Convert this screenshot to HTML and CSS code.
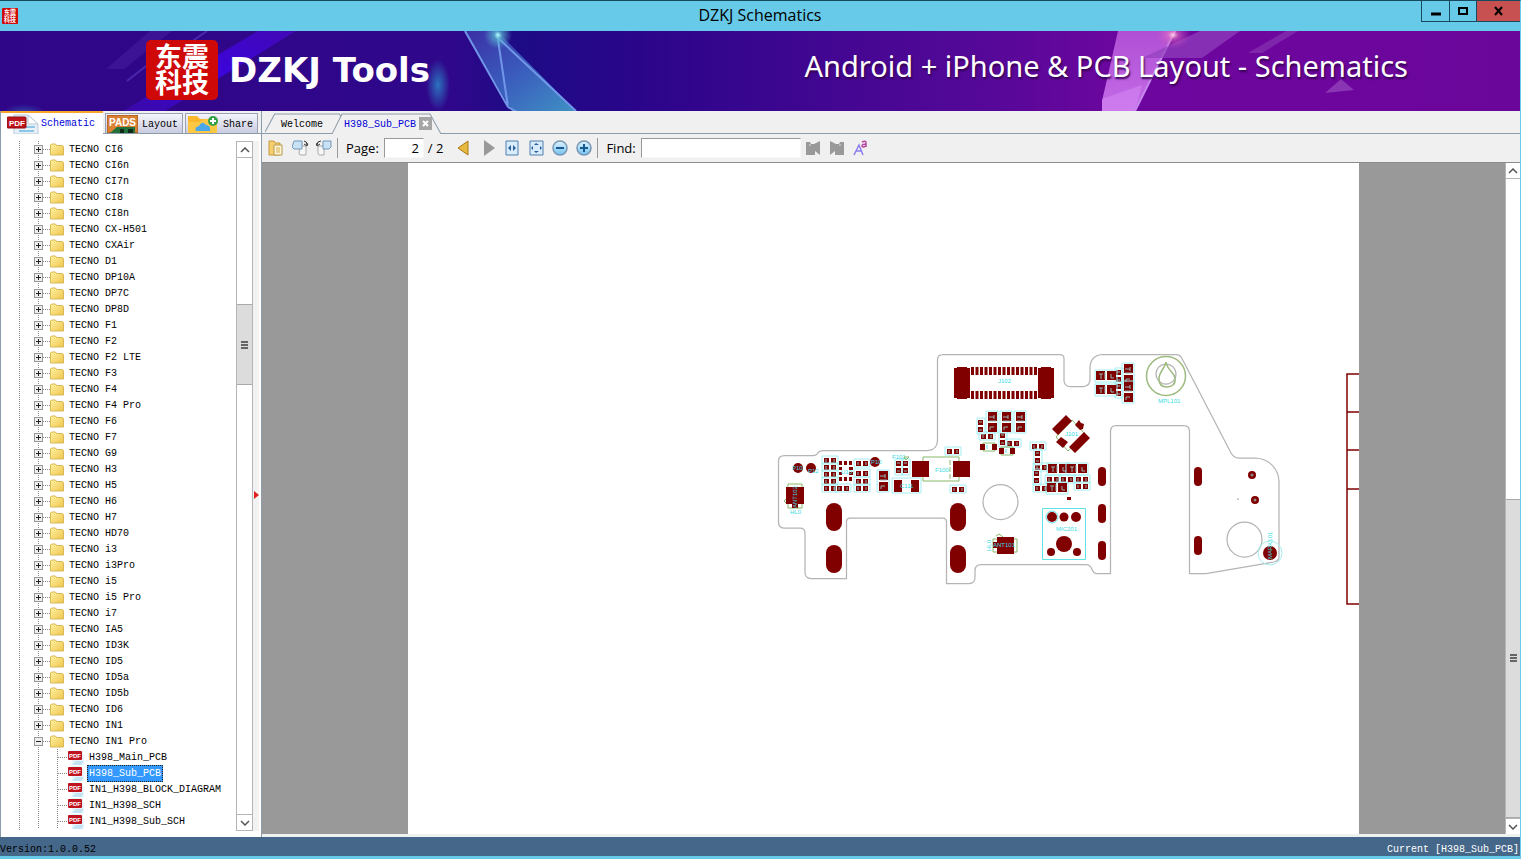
FILE: index.html
```html
<!DOCTYPE html>
<html lang="en">
<head>
    <meta charset="UTF-8">
    <meta name="viewport" content="width=device-width, initial-scale=1.0">
    <title>DZKJ Schematics</title>
    <link rel="stylesheet" href="styles.css">
</head>
<body>
    <svg class="defs" width="0" height="0" aria-hidden="true">
        <linearGradient id="gold" x2="1" y2="1"><stop offset="0" stop-color="#fff2a0"/><stop offset="1" stop-color="#edc650"/></linearGradient>
        <linearGradient id="blue" x2="0" y2="1"><stop offset="0" stop-color="#e4f4fd"/><stop offset="1" stop-color="#6fc0ee"/></linearGradient>
        <symbol id="logo" viewBox="0 0 72 60" overflow="visible">
            <rect width="72" height="60" rx="5" fill="#cf0808"/>
            <text x="9" y="27" class="logo-text">东震</text>
            <text x="9" y="53" class="logo-text">科技</text>
        </symbol>
        <symbol id="folder" viewBox="0 0 14 13">
            <path d="M.5 12V2l1-1h4l1 1.500h6l1 1V12z" fill="url(#gold)" stroke="#d9b855"/>
        </symbol>
        <symbol id="pdf" viewBox="0 0 16 15">
            <path d="M4 0h8l4 4v11H4z" fill="#e6f4fb"/>
            <path d="M7 12h8M5 14h9" stroke="#9fd2ec"/>
            <rect y="1" width="14" height="9" rx="1" fill="#bf1420"/>
            <text x="1" y="8" class="pdf-text">PDF</text>
        </symbol>
    </svg>

    <div class="window">
        <header class="titlebar">
            <svg class="app-icon" viewBox="0 0 72 60" preserveAspectRatio="none"><use href="#logo"/></svg>
            <h1>DZKJ Schematics</h1>
            <div class="window-buttons">
                <button type="button" aria-label="Minimize"><svg width="10" height="10"><path d="M0 8h10" stroke="#000" stroke-width="3"/></svg></button>
                <button type="button" aria-label="Maximize"><svg width="10" height="10"><path d="M1 2h8v6H1z" fill="none" stroke="#000" stroke-width="2"/></svg></button>
                <button type="button" class="close" aria-label="Close"><svg width="10" height="10"><path d="M1 1l7 8M8 1L1 9" stroke="#000" stroke-width="2"/></svg></button>
            </div>
        </header>

        <div class="banner">
            <svg class="banner-art" viewBox="0 0 1520 80" preserveAspectRatio="none" aria-hidden="true">
                <defs>
                    <linearGradient id="violet"><stop offset="0" stop-color="#300688"/><stop offset=".3" stop-color="#2f078a"/><stop offset=".34" stop-color="#1d0b85"/><stop offset=".42" stop-color="#2a058a"/><stop offset=".65" stop-color="#560898"/><stop offset=".74" stop-color="#6d069e"/><stop offset="1" stop-color="#6b069b"/></linearGradient>
                    <linearGradient id="ray" x1="1" x2="0" y2="1"><stop offset="0" stop-color="#4208b4"/><stop offset=".5" stop-color="#3b04dc"/><stop offset="1" stop-color="#3a09a5"/></linearGradient>
                    <linearGradient id="glass" y2="1"><stop offset="0" stop-color="#3b2fa5"/><stop offset=".5" stop-color="#3a5cbd"/><stop offset="1" stop-color="#3f91c4"/></linearGradient>
                    <linearGradient id="pink" x2="0" y2="1"><stop offset="0" stop-color="#b04fd4"/><stop offset="1" stop-color="#c46be8"/></linearGradient>
                    <radialGradient id="glow"><stop offset="0" stop-color="#2b7fc4" stop-opacity=".9"/><stop offset="1" stop-color="#2b7fc4" stop-opacity="0"/></radialGradient>
                    <radialGradient id="spark"><stop offset="0" stop-color="#b6ffff"/><stop offset=".3" stop-color="#57b8d0" stop-opacity=".7"/><stop offset="1" stop-color="#57b8d0" stop-opacity="0"/></radialGradient>
                    <radialGradient id="flare"><stop offset="0" stop-color="#ffd4ec"/><stop offset=".3" stop-color="#e470c4" stop-opacity=".6"/><stop offset="1" stop-color="#c050c0" stop-opacity="0"/></radialGradient>
                </defs>
                <rect width="1520" height="80" fill="url(#violet)"/>
                <path d="M258 0h38L165 80h-42z" fill="url(#ray)"/>
                <path d="M150 0h22l-48 38h-18z" fill="#4820a0" opacity=".5"/>
                <path d="M207 0l-55 38M155 28l-28 22" stroke="#4a27ad" stroke-width="2"/>
                <ellipse cx="438" cy="54" rx="12" ry="26" fill="url(#glow)"/>
                <ellipse cx="24" cy="82" rx="22" ry="9" fill="url(#glow)" opacity=".6"/>
                <path d="M465 0h32l79 80h-64z" fill="url(#glass)"/>
                <path d="M497 2l11 74-43-76M497 6l79 74M508 76l9 5" fill="none" stroke="#7196e8" stroke-width="2"/>
                <ellipse cx="498" cy="4" rx="14" ry="14" fill="url(#spark)"/>
                <path d="M1118 0h58l-41 80h-33V70z" fill="url(#pink)"/>
                <path d="M1102 68l40-14-7 26h-33z" fill="#d58bf4" opacity=".5"/>
                <path d="M1175 0l-40 80" stroke="#c786ec" stroke-width="2"/>
                <path d="M1200 0h40l-38 27h-60z" fill="#9240bd" opacity=".7"/>
                <path d="M1286 0h12l-36 22h-14z" fill="#8c3ab5" opacity=".6"/>
                <path d="M1341 48l13 11-29 3z" fill="#8a35b4"/>
                <ellipse cx="1173" cy="4" rx="18" ry="14" fill="url(#flare)"/>
            </svg>
            <div class="brand">
                <svg class="brand-logo" viewBox="0 0 72 60"><use href="#logo"/></svg>
                <span>DZKJ Tools</span>
            </div>
            <p class="slogan">Android + iPhone &amp; PCB Layout - Schematics</p>
        </div>

        <main class="main">
            <aside class="side">
                <nav class="side-tabs">
                    <button type="button" class="side-tab active">
                        <svg width="32" height="20" viewBox="0 0 32 20"><path d="M7 1h14l10 9v10H7z" fill="#e9f1f8" stroke="#b8cad8"/><path d="M21 1l10 9h-10z" fill="#fff" stroke="#b8cad8"/><path d="M19 13h9M12 17h15" stroke="#8ec6e8" stroke-width="2"/><rect y="3" width="19" height="11" rx="1" fill="#c0141c" stroke="#8e0c12"/><text x="2" y="12" class="badge-text">PDF</text></svg>
                        Schematic
                    </button>
                    <button type="button" class="side-tab">
                        <svg width="31" height="18" viewBox="0 0 31 18"><path d="M0 0h31v18H0z" fill="#d98234"/><path d="M0 0h31v18H0z" fill="none" stroke="#9c4c18"/><path d="M3 18l7-6h18v6z" fill="#23703a"/><path d="M13 14h4v4h-4zM21 14h5v4h-5z" fill="#0e2a18"/><text x="2" y="11" class="pads-text">PADS</text></svg>
                        Layout
                    </button>
                    <button type="button" class="side-tab">
                        <svg width="32" height="18" viewBox="0 0 32 18"><path d="M1 1h9l3 3h14l3 3v11H1z" fill="#fcb82c"/><path d="M1 7h12l4-3h13v14H1z" fill="#ffcf50" opacity=".7"/><path d="M9 16q-2-4 3-5 3-6 7-1 5 0 4 6z" fill="#4aa8ea"/><circle cx="26" cy="6" r="5" fill="#35a046"/><path d="M23 6h6M26 3v6" stroke="#fff" stroke-width="2"/></svg>
                        Share
                    </button>
                </nav>
                <div class="tree-wrap">
                    <ul class="tree" id="tree"></ul>
                    <div class="scrollbar">
                        <button type="button" aria-label="Scroll up"><svg width="10" height="6"><path d="M1 5l4-4 4 4" /></svg></button>
                        <div class="track"><div class="tree-before"></div><div class="thumb tree-thumb"><i></i></div></div>
                        <button type="button" aria-label="Scroll down"><svg width="10" height="6"><path d="M1 1l4 4 4-4" /></svg></button>
                    </div>
                    <div class="splitter"><svg width="5" height="10"><path d="M0 1l5 4-5 4z" fill="#e02020"/></svg></div>
                </div>
            </aside>

            <section class="content">
                <nav class="doc-tabs">
                    <button type="button" class="doc-tab welcome">
                        <svg class="tab-shape" viewBox="0 0 78 21" preserveAspectRatio="none"><path d="M0 20l9-19h60l6 10"/></svg>
                        <span>Welcome</span>
                    </button>
                    <button type="button" class="doc-tab current">
                        <svg class="tab-shape" viewBox="0 0 110 21" preserveAspectRatio="none"><path d="M0 21L10 1h88l11 20"/></svg>
                        <span>H398_Sub_PCB</span>
                        <svg class="tab-close" width="13" height="13"><path d="M0 0h13v13H0z" fill="#a5a5a5"/><path d="M4 4l5 5M9 4L4 9" stroke="#fff" stroke-width="2"/></svg>
                    </button>
                </nav>

                <div class="toolbar">
                    <div class="tools">
                        <button type="button" aria-label="Copy"><svg width="16" height="16"><path d="M1 1h5l1 2h5v12H1z" fill="#f5cf6e" stroke="#c99840"/><path d="M6 5h8v10H6z" fill="#fff7d8" stroke="#b9974e"/><path d="M8 8h4M8 10h4M8 12h4" stroke="#d3a848"/></svg></button>
                        <button type="button" aria-label="Rotate right"><svg width="16" height="16"><path d="M8 6h6v9H8l-1-2z" fill="#f7f7f7" stroke="#aaa"/><path d="M2 1h8v8H2L0 7z" fill="#c9e2f6" stroke="#7399bb"/><path d="M12 1q3 0 3 4M12 4l3 2 1-3" fill="none" stroke="#333"/></svg></button>
                        <button type="button" aria-label="Rotate left"><svg width="16" height="16"><path d="M2 6h6v9H3l-1-2z" fill="#f7f7f7" stroke="#aaa"/><path d="M7 1h8v6l-2 2H7z" fill="#c9e2f6" stroke="#7399bb"/><path d="M5 1Q1 1 1 5M4 4L1 6 0 3" fill="none" stroke="#333"/></svg></button>
                    </div>
                    <div class="page-field">
                        <label for="page">Page:</label>
                        <input type="text" id="page" value="2">
                        <span>/ 2</span>
                    </div>
                    <div class="tools zoom-tools">
                        <button type="button" aria-label="Previous page"><svg width="16" height="16"><path d="M12 1v14L2 8z" fill="#e8b940" stroke="#a87916"/></svg></button>
                        <button type="button" aria-label="Next page"><svg width="16" height="16"><path d="M4 0v16L15 8z" fill="#999"/></svg></button>
                        <button type="button" aria-label="Fit width"><svg width="16" height="16"><path d="M2 1h12v14H2z" fill="#d8ebfa" stroke="#4f7fb0"/><path d="M7 5L4 8l3 3zM9 5l3 3-3 3z" fill="#285f9c"/></svg></button>
                        <button type="button" aria-label="Fit page"><svg width="16" height="16"><path d="M2 1h13v14H2z" fill="#d8ebfa" stroke="#4f7fb0"/><path d="M6 5l2-2 3 2zM6 11l2 2 3-2zM5 6L3 8l2 2zM12 6l2 2-2 2z" fill="#285f9c"/></svg></button>
                        <button type="button" aria-label="Zoom out"><svg width="16" height="16"><circle cx="8" cy="8" r="7" fill="url(#blue)" stroke="#7797b4" stroke-width="1.500"/><path d="M4 8h8" stroke="#175a90" stroke-width="2"/></svg></button>
                        <button type="button" aria-label="Zoom in"><svg width="16" height="16"><circle cx="8" cy="8" r="7" fill="url(#blue)" stroke="#7797b4" stroke-width="1.500"/><path d="M4 8h8M8 4v8" stroke="#175a90" stroke-width="2"/></svg></button>
                    </div>
                    <div class="find-field">
                        <label for="find">Find:</label>
                        <input type="text" id="find">
                    </div>
                    <div class="tools find-tools">
                        <button type="button" aria-label="Find previous"><svg width="16" height="16"><path d="M1 2h4l1 2h3l6-3v14l-5-4v4H1z" fill="#999"/><path d="M4 5h2" stroke="#ddd"/></svg></button>
                        <button type="button" aria-label="Find next"><svg width="16" height="16"><path d="M15 2h-4l-1 2H7L1 1v14l5-4v4h9z" fill="#999"/><path d="M10 5h2" stroke="#ddd"/></svg></button>
                        <button type="button" aria-label="Match case"><svg width="16" height="16"><path d="M1 15L6 5l4 10M3 11h6" fill="none" stroke="#8d7cf0" stroke-width="1.500"/><path d="M9 2q4-2 4 1v4M13 4q-4 0-4 2t4 0" fill="none" stroke="#b8479e" stroke-width="1.500"/></svg></button>
                    </div>
                </div>

                <div class="viewer">
                    <div class="sheet">
                        <svg class="pcb" viewBox="408 163 951 671" preserveAspectRatio="xMidYMin meet">
                            <defs>
                                <g id="ch"><path class="silk-soft" d="M-8-4H8V4H-8z"/><path class="pad" d="M-6-2h5v5h-5zM1-2h5v5H1z"/><path class="mark" d="M-4-1v3M4-1v3"/></g>
                                <g id="cv"><use href="#ch" transform="rotate(90)"/></g>
                                <g id="mh"><path class="silk-soft" d="M-11-6h22V6h-22z"/><path class="pad" d="M-10-5h9v9h-9zM1-5h9v9H1z"/><path class="mark" d="M-7-2h4M-5-2v5M5-2v4h3M-1-4v7"/></g>
                                <g id="mv"><use href="#mh" transform="rotate(90)"/></g>
                                <rect id="slot" class="pad" width="16" height="28" rx="8"/>
                                <rect id="slim" class="pad" width="8" height="19" rx="4"/>
                            </defs>
                            <path class="outline" d="M942 354.500H1060q4 0 4 4V381q1 5.500 6 5.500H1084q6-1 6-7V367q1-12 13-12.500H1176q4 0 6 4L1231 453q3 5 8 5H1256c14 1 23 12 23 24V557q0 4-5 5L1206 573.500H1189.500V431q0-5.500-6-5.500H1116q-5.500 0-5.500 6V573.500H1097c-7 0-3-9-11-9H981q-6 0-6 6V577q0 6.500-6 6.500H946.500V522q0-4-4-4H850q-3.500 0-3.500 4V578.500H811q-6 0-6-6V533q0-5-5-5H784q-5.500 0-5.500-6V461q0-5.500 6-5.500H813q4 0 5-3 2-2 5-2H927q10 0 10.500-10V360q0-5.500 5-5.500z"/>
                            <circle class="outline" cx="1000.500" cy="502" r="17.500"/>
                            <circle class="outline" cx="1244.500" cy="539.500" r="17.500"/>

                            <!-- J102 board connector -->
                            <path class="pad" d="M954 368h3v-1h10v1h3v30h-3v1h-10v-1h-3zM1038 368h3v-1h10v1h3v30h-3v1h-10v-1h-3z"/>
                            <path class="pins" d="M971 371h66M971 395h66"/>
                            <text class="ref" x="998" y="383">J102</text>

                            <g id="smallParts"></g>

                            <!-- U101 -->
                            <path class="pad" d="M839 461h3v4h-3zM844 461h3v4h-3zM849 461h3v4h-3zM839 467h3v3h-3zM849 467h4v3h-4zM839 472h3v3h-3zM849 472h4v3h-4zM839 477h3v4h-3zM844 477h3v4h-3zM849 477h3v4h-3z"/>
                            <text class="ref" x="841" y="474">U10</text>

                            <!-- antennas and test points -->
                            <path class="green" d="M788 484h14v24h-14zM786 499l-2 2 3 3"/>
                            <path class="pad" d="M786 487h18v17h-18zM792 504h6v4h-6z"/>
                            <text class="ref" transform="translate(797 508) rotate(-90)">ANT102</text>
                            <text class="ref" x="790" y="514">HL0</text>
                            <path class="green" d="M993 539h24v13h-24zM996 536l3-2 4 3"/>
                            <path class="pad" d="M997 537h17v17h-17zM993 542h4v6h-4z"/>
                            <text class="ref" x="993" y="547">ANT101</text>
                            <text class="ref" transform="translate(991 551) rotate(-90)">HL0</text>
                            <circle class="pad" cx="798" cy="468" r="5"/>
                            <circle class="pad" cx="811" cy="468" r="5"/>
                            <circle class="pad" cx="875" cy="462" r="5"/>
                            <text class="ref" x="792" y="470">P10</text>
                            <text class="ref" x="808" y="473">P12</text>
                            <text class="ref" x="871" y="464">P10</text>

                            <!-- F100 -->
                            <path class="green" d="M923 457h36v24h-36z"/>
                            <path class="green" d="M950 460v20" stroke-dasharray="5 2"/>
                            <path class="pad" d="M912 461h17v16h-17zM953 461h17v16h-17z"/>
                            <text class="ref" x="935" y="472">F100</text>
                            <path class="silk-soft" d="M892 478h29v15h-29z"/>
                            <path class="pad" d="M894 480h8v12h-8zM911 480h8v12h-8z"/>
                            <text class="ref" x="900" y="488">C111</text>
                            <text class="ref" x="892" y="459">F101</text>
                            <path class="green" d="M904 457h5l-3 3z"/>

                            <use href="#slot" x="826" y="503"/><use href="#slot" x="826" y="545"/>
                            <use href="#slot" x="950" y="503"/><use href="#slot" x="950" y="545"/>
                            <use href="#slim" x="1098" y="467"/><use href="#slim" x="1098" y="504"/><use href="#slim" x="1098" y="541"/>
                            <use href="#slim" x="1194" y="467"/><use href="#slim" x="1194" y="536"/>

                            <!-- diodes -->
                            <path class="green" d="M983 443h12v8h-12zM1001 447h12v8h-12z"/>
                            <path class="pad" d="M980 444h5v6h-5zM992 444h5v6h-5zM999 448h5v6h-5zM1010 448h5v6h-5z"/>
                            <path class="silk" d="M987 445v4M1006 449v4"/>

                            <!-- J101 -->
                            <path class="green" d="M1072 420l13 14-17 17-12-14z"/>
                            <path class="pad" d="M1052 429l14-14 6 6-14 14zM1084 432l6 6-15 15-6-6zM1056 442l5-5 7 5-5 6zM1075 425l4-5 2 3 3 1-1 5-3 1z"/>
                            <text class="ref" x="1065" y="436">J101</text>

                            <!-- MIC201 -->
                            <path class="silk" d="M1042.500 508.500h43v51h-43z"/>
                            <circle class="silk" cx="1052" cy="517" r="6"/>
                            <g class="pad"><circle cx="1052" cy="517" r="5"/><circle cx="1064" cy="517" r="4.500"/><circle cx="1076" cy="517" r="5"/><circle cx="1064" cy="544" r="8"/><circle cx="1051" cy="552" r="4"/><circle cx="1077" cy="552" r="4"/><path d="M1067 497h4v3h-4z"/></g>
                            <text class="ref" x="1056" y="531">MIC201</text>

                            <!-- MPL101 -->
                            <circle class="outline" cx="1166" cy="374" r="10"/>
                            <g class="ring"><circle cx="1166" cy="376" r="19.500"/><path d="M1166 362C1165 369 1159 371 1159 379C1159 384 1162 387 1167 387C1172 387 1176 384 1175 378C1174 372 1167 370 1166 362z"/></g>
                            <text class="ref" x="1158" y="403">MPL101</text>

                            <circle class="pad" cx="1252" cy="475" r="4"/>
                            <circle class="pad" cx="1255" cy="500" r="4"/>
                            <circle class="mark" cx="1252" cy="475" r="1"/>
                            <circle class="mark" cx="1255" cy="500" r="1"/>
                            <path class="outline" d="M1237 499h2"/>
                            <circle class="silk-soft" cx="1270" cy="553" r="12"/>
                            <circle class="pad" cx="1270" cy="553" r="7"/>
                            <text class="ref" transform="translate(1272 559) rotate(-90)">MARK101</text>

                            <path class="frame" d="M1360 374h-13v230h13M1347 412h13M1347 450h13M1347 489h13"/>
                        </svg>
                    </div>
                    <div class="scrollbar doc-scroll">
                        <button type="button" aria-label="Page up"><svg width="10" height="6"><path d="M1 5l4-4 4 4" /></svg></button>
                        <div class="track"><div class="doc-before"></div><div class="thumb doc-thumb"><i></i></div></div>
                        <button type="button" aria-label="Page down"><svg width="10" height="6"><path d="M1 1l4 4 4-4" /></svg></button>
                    </div>
                </div>
            </section>
        </main>

        <footer class="status">
            <span>Version:1.0.0.52</span>
            <span class="current-file">Current [H398_Sub_PCB]</span>
        </footer>
    </div>

    <script>
        const folders = ['CI6', 'CI6n', 'CI7n', 'CI8', 'CI8n', 'CX-H501', 'CXAir', 'D1', 'DP10A', 'DP7C', 'DP8D',
            'F1', 'F2', 'F2 LTE', 'F3', 'F4', 'F4 Pro', 'F6', 'F7', 'G9', 'H3', 'H5', 'H6', 'H7', 'HD70',
            'i3', 'i3Pro', 'i5', 'i5 Pro', 'i7', 'IA5', 'ID3K', 'ID5', 'ID5a', 'ID5b', 'ID6', 'IN1', 'IN1 Pro'];
        const files = ['H398_Main_PCB', 'H398_Sub_PCB', 'IN1_H398_BLOCK_DIAGRAM', 'IN1_H398_SCH', 'IN1_H398_Sub_SCH'];

        function folderRow(name) {
            const open = name === 'IN1 Pro';
            return '<li class="folder"><button type="button" class="toggle' + (open ? ' open' : '') + '" aria-label="Toggle"></button>' +
                '<svg width="14" height="13"><use href="#folder"/></svg><span>TECNO ' + name + '</span></li>';
        }

        function fileRow(name) {
            const selected = name === 'H398_Sub_PCB' ? ' selected' : '';
            return '<li class="file' + selected + '"><svg width="16" height="15"><use href="#pdf"/></svg><span>' + name + '</span></li>';
        }

        document.getElementById('tree').innerHTML = folders.map(folderRow).join('') + files.map(fileRow).join('');

        // part centres on the board
        const parts = {
            ch: [[830, 460], [830, 467], [830, 474], [830, 481], [830, 488], [843, 488], [862, 463], [862, 473], [862, 481],
                [862, 488], [953, 451], [958, 489], [987, 436], [1013, 443], [1038, 446], [1041, 467], [1041, 488],
                [1053, 479], [1067, 479], [1082, 479], [1082, 486]],
            cv: [[981, 426], [1003, 439], [1119, 376], [1119, 390], [1038, 457], [1037, 477], [899, 467], [906, 467]],
            mh: [[1106, 376], [1106, 390], [1058, 469], [1077, 469], [1057, 488]],
            mv: [[992, 422], [1006, 422], [1020, 422], [883, 481], [1128, 374], [1128, 392]]
        };
        let svg = '';
        for (const type in parts) {
            parts[type].forEach(function (p) {
                svg += '<use href="#' + type + '" x="' + p[0] + '" y="' + p[1] + '"/>';
            });
        }
        document.getElementById('smallParts').innerHTML = svg;
    </script>
</body>
</html>
```

FILE: styles.css
```css
* { margin: 0; padding: 0; box-sizing: border-box; }
html, body { height: 100%; overflow: hidden; }
body {
    font-family: "Liberation Mono", "Noto Sans CJK SC", monospace;
    font-size: 10px;
    color: #000;
}
button { border: none; background: none; font: inherit; color: inherit; }
svg { display: block; flex: none; }
.defs { position: absolute; }

.window {
    height: 100vh;
    display: flex;
    flex-direction: column;
    background: #f0f0f0;
    border-top: 1px solid #17495f;
    border-right: 1px solid #66cae8;
    border-bottom: 3px solid #66cae8;
}

/* title bar */
.titlebar {
    height: 30px;
    display: grid;
    grid-template-columns: 1fr auto 1fr;
    align-items: center;
    background: #66cae8;
}
.titlebar h1 {
    padding-bottom: 2px;
    font: 16px/20px "Open Sans", "Noto Sans", sans-serif;
}
.app-icon { width: 16px; height: 16px; margin-left: 2px; overflow: visible; }
.window-buttons {
    display: flex;
    justify-self: end;
    align-self: start;
    height: 21px;
    border: 1px solid #17495f;
    border-width: 0 0 1px 1px;
}
.window-buttons button {
    width: 27px;
    display: flex;
    align-items: center;
    justify-content: center;
}
.window-buttons button + button { border-left: 1px solid #17495f; }
.window-buttons .close { width: 44px; background: #c75050; }

/* banner */
.banner {
    position: relative;
    height: 80px;
    display: flex;
    align-items: center;
    justify-content: space-between;
    padding: 0 112px 2px 146px;
    color: #fff;
    font-family: "Noto Sans", "Open Sans", sans-serif;
}
.banner-art { position: absolute; inset: 0; width: 100%; height: 100%; }
.brand {
    position: relative;
    display: flex;
    align-items: center;
    gap: 11px;
    font: 700 34px/40px "DejaVu Sans", sans-serif;
}
.brand-logo { width: 72px; height: 60px; overflow: visible; }
.slogan {
    position: relative;
    padding-bottom: 8px;
    font-size: 29px;
    line-height: 40px;
    text-shadow: 1px 2px 2px #33004f;
}
.logo-text { font: 700 27px "Noto Sans CJK SC", sans-serif; fill: #fff; }
.pdf-text { font: 700 6px "Liberation Sans", sans-serif; fill: #fff; }
.badge-text { font: 700 8px "Liberation Sans", sans-serif; fill: #fff; }
.pads-text { font: 700 10px "Liberation Sans", sans-serif; fill: #fff; }

/* side panel */
.main { flex: 1; min-height: 0; display: flex; }
.side {
    width: 262px;
    display: flex;
    flex-direction: column;
    background: #fff;
    border-left: 1px solid #8c9cab;
    border-right: 1px solid #8c9cab;
}
.side-tabs {
    height: 23px;
    display: flex;
    align-items: flex-end;
    background: #f0f0f0;
    border-bottom: 1px solid #8c9cab;
}
.side-tab {
    height: 20px;
    display: flex;
    align-items: center;
    gap: 4px;
    padding: 1px 4px 0 1px;
    margin-left: 2px;
    border: 1px solid #98a1b8;
    border-bottom: none;
    background: linear-gradient(#f4f5fa, #c9cbe0);
    overflow: hidden;
}
.side-tab.active {
    height: 23px;
    margin: 0 0 -1px;
    padding: 0 8px 0 6px;
    gap: 2px;
    border: none;
    border-top: 2px solid #f7a62c;
    background: #fff;
    color: #0000d8;
}
.tree-wrap { flex: 1; min-height: 0; display: flex; padding: 7px 0 6px; }
.tree {
    flex: 1;
    overflow: hidden;
    list-style: none;
    background: repeating-linear-gradient(#888 0 1px, transparent 1px 2px) 18px 0 / 1px 100% no-repeat;
}
.tree li { height: 16px; display: flex; align-items: center; line-height: 14px; white-space: nowrap; }
.tree .folder {
    padding-left: 33px;
    gap: 5px;
    background:
        repeating-linear-gradient(#888 0 1px, transparent 1px 2px) 37px 0 / 1px 100% no-repeat,
        repeating-linear-gradient(90deg, #888 0 1px, transparent 1px 2px) 42px 8px / 8px 1px no-repeat;
}
.folder svg { margin-left: 2px; }
.folder span { padding-top: 2px; }
.toggle {
    flex: none;
    width: 9px;
    height: 9px;
    border: 1px solid #999;
    background:
        linear-gradient(#222, #222) center / 5px 1px no-repeat,
        linear-gradient(#222, #222) center / 1px 5px no-repeat,
        #eee;
}
.toggle.open { background: linear-gradient(#222, #222) center / 5px 1px no-repeat, #eee; }
.tree .file {
    padding-left: 67px;
    gap: 4px;
    background:
        repeating-linear-gradient(#888 0 1px, transparent 1px 2px) 37px 0 / 1px 100% no-repeat,
        repeating-linear-gradient(#888 0 1px, transparent 1px 2px) 56px 0 / 1px 100% no-repeat,
        repeating-linear-gradient(90deg, #888 0 1px, transparent 1px 2px) 57px 8px / 10px 1px no-repeat;
}
.file span { padding: 1px 1px 0; border: 1px solid transparent; margin: 0 -1px; }
.file.selected span { background: #3399ff; color: #fff; border: 1px dotted #222; }

.scrollbar {
    width: 17px;
    display: flex;
    flex-direction: column;
    background: #fff;
    border: 1px solid #b5b5b5;
}
.scrollbar button { height: 16px; display: flex; align-items: center; justify-content: center; border-bottom: 1px solid #b5b5b5; }
.scrollbar button:last-child { border-top: 1px solid #b5b5b5; border-bottom: none; }
.scrollbar path { fill: none; stroke: #555; stroke-width: 1.5; }
.track { flex: 1; display: flex; flex-direction: column; }
.thumb {
    display: flex;
    align-items: center;
    justify-content: center;
    background: #dcdcdc;
    border: 1px solid #aaa;
    border-width: 1px 0;
}
.thumb i { width: 7px; height: 8px; background: repeating-linear-gradient(#666 0 2px, transparent 2px 3px); }
.tree-before { height: 146px; }
.tree-thumb { height: 81px; }
.splitter {
    width: 8px;
    display: flex;
    align-items: center;
    background: linear-gradient(90deg, #f2f2f2 0 6px, #fff 6px);
    padding: 17px 0 0 1px;
}

/* document area */
.content { flex: 1; min-width: 0; display: flex; flex-direction: column; }
.doc-tabs { height: 23px; display: flex; align-items: flex-end; padding-left: 3px; border-bottom: 1px solid #8c9cab; }
.doc-tab { position: relative; height: 21px; display: flex; align-items: center; margin-bottom: -1px; }
.doc-tab span { position: relative; padding-top: 2px; }
.tab-shape { position: absolute; inset: 0; width: 100%; height: 100%; }
.tab-shape path { fill: #f0f0f0; stroke: #8c9cab; }
.welcome { padding: 0 26px 0 16px; margin-right: -17px; border-bottom: 1px solid #8c9cab; }
.current { padding: 0 10px 0 12px; gap: 3px; color: #0000d8; }
.tab-close { position: relative; }

.toolbar {
    height: 28px;
    display: flex;
    align-items: center;
    font: 13px/18px "Open Sans", "Noto Sans", sans-serif;
}
.tools { display: flex; gap: 8px; padding-left: 6px; }
.tools button { display: flex; }
.page-field, .find-field {
    display: flex;
    align-items: center;
    margin-left: 5px;
    padding-left: 8px;
    border-left: 1px solid #999;
}
.toolbar input {
    height: 20px;
    border: 1px solid #999;
    border-color: #999 #f8f8f8 #f8f8f8 #999;
    background: #fff;
    font: inherit;
    outline: none;
}
.page-field input { width: 40px; margin: 0 4px 0 5px; padding-right: 4px; text-align: right; }
.find-field input { width: 160px; margin-left: 5px; }
.zoom-tools { padding-left: 13px; }
.find-tools { padding-left: 4px; }

.viewer {
    flex: 1;
    min-height: 0;
    display: flex;
    background: #999;
    border-top: 1px solid #8c8c8c;
    margin-bottom: 3px;
}
.sheet { flex: 1; min-width: 0; margin: 0 146px; background: #fff; overflow: hidden; }
.doc-scroll { width: 15px; border-width: 0 0 0 1px; }
.doc-before { height: 50%; }
.doc-thumb { flex: 1; }

/* board drawing */
.pcb { width: 100%; }
.pcb .outline { fill: none; stroke: #b4b4b4; stroke-width: 1.25; }
.pcb .pad { fill: #800000; }
.pcb .pins { fill: none; stroke: #800000; stroke-width: 8; stroke-dasharray: 3 1.5; }
.pcb .silk { fill: none; stroke: #61e2e8; }
.pcb .silk-soft { fill: none; stroke: #a4eef0; }
.pcb .mark { fill: none; stroke: #92b9b9; }
.pcb .green { fill: none; stroke: #87b96c; }
.pcb .ring { fill: none; stroke: #9dba7f; stroke-width: 1.5; }
.pcb .frame { fill: none; stroke: #800000; stroke-width: 1.5; }
.pcb .ref { font: 6px "Liberation Sans", sans-serif; fill: #35dbe4; }

/* status bar */
.status {
    height: 19px;
    display: flex;
    justify-content: space-between;
    align-items: center;
    padding-top: 5px;
    background: #456789;
}
.current-file { color: #fff; padding-right: 1px; }
```
